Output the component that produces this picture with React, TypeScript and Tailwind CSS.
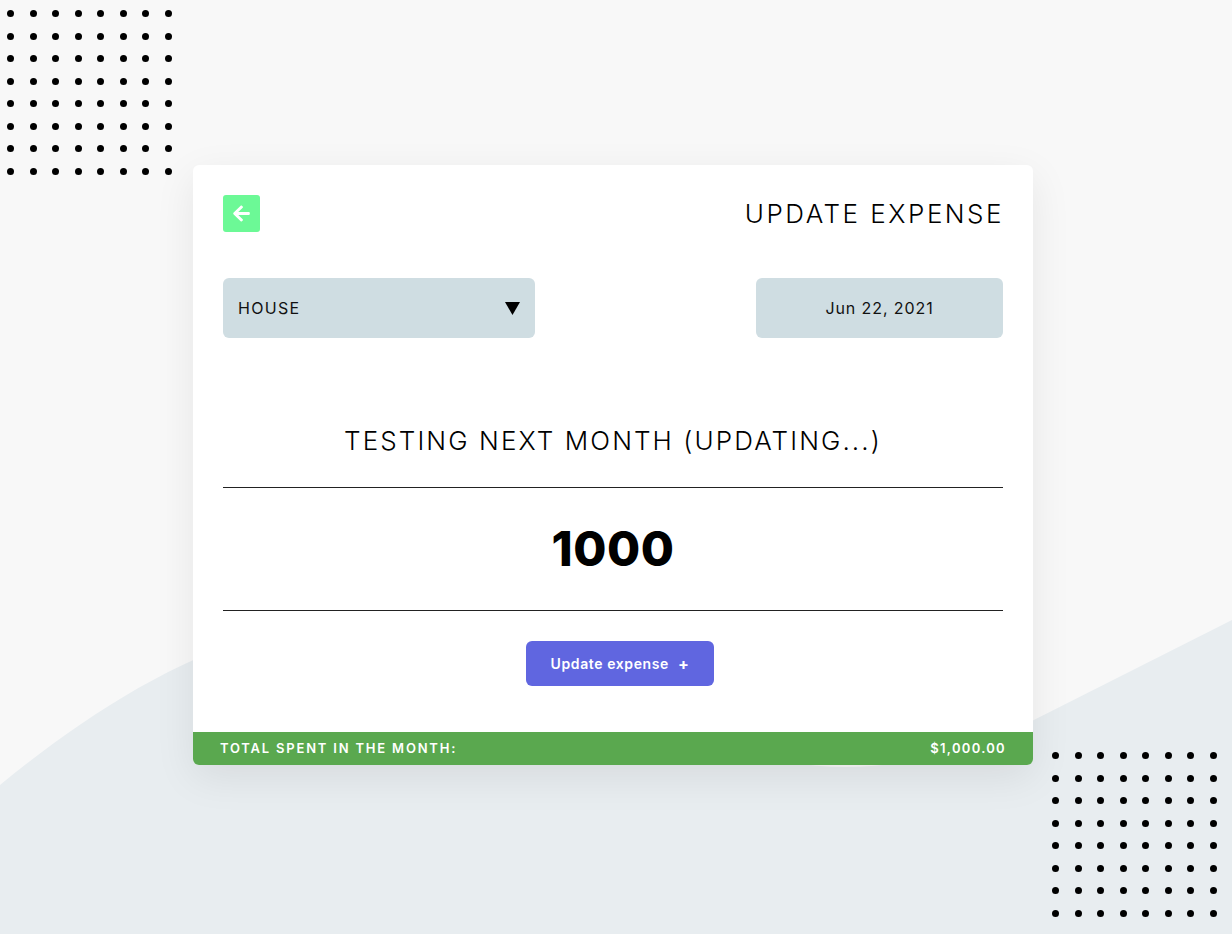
import React from "react";
import { FaArrowLeft } from "react-icons/fa";

const DotGrid = ({ className }: { className: string }) => (
  <div className={`grid grid-cols-8 gap-x-[15.5px] gap-y-[15.5px] ${className}`}>
    {Array.from({ length: 64 }).map((_, i) => (
      <span key={i} className="block w-[7px] h-[7px] rounded-full bg-black" />
    ))}
  </div>
);

export default function App() {
  return (
    <div
      className="relative min-h-[934px] w-full overflow-hidden bg-[#f8f8f8] flex items-start"
      style={{ fontFamily: "Inter, 'Liberation Sans', sans-serif" }}
    >
      <svg
        className="absolute inset-0 w-[1232px] h-[934px]"
        viewBox="0 0 1232 934"
        preserveAspectRatio="none"
      >
        <path
          d="M0,785 C200,620 420,540 650,700 C750,770 850,790 1000,737 L1232,620 L1232,934 L0,934 Z"
          fill="#e8edf0"
        />
      </svg>
      <DotGrid className="absolute left-[7px] top-[10px]" />
      <DotGrid className="absolute left-[1052px] top-[752px]" />

      <div className="relative ml-[193px] mt-[165px] w-[840px] h-[600px] bg-white rounded-[6px] shadow-[0_12px_40px_rgba(0,0,0,0.08)] flex flex-col overflow-hidden">
        <div className="flex flex-col px-[30px] pt-[30px]">
          <div className="flex items-center justify-between h-[37px]">
            <button className="w-[37px] h-[37px] rounded-[3px] bg-[#6cf996] flex items-center justify-center text-white">
              <FaArrowLeft size={19} />
            </button>
            <h1 className="text-[26px] font-light tracking-[2.5px] text-black leading-none -mr-[1px]">
              UPDATE EXPENSE
            </h1>
          </div>

          <div className="mt-[46px] flex justify-between h-[60px]">
            <div className="w-[312px] h-[60px] rounded-[6px] bg-[#cfdde2] flex items-center justify-between pl-[15px] pr-[15px]">
              <span className="text-[16px] tracking-[1.3px] text-[#111]">HOUSE</span>
              <svg width="15" height="13" viewBox="0 0 15 13">
                <polygon points="0,0 15,0 7.5,13" fill="#000" />
              </svg>
            </div>
            <div className="w-[247px] h-[60px] rounded-[6px] bg-[#cfdde2] flex items-center justify-center">
              <span className="text-[16px] tracking-[0.9px] text-[#111]">Jun 22, 2021</span>
            </div>
          </div>

          <div className="mt-[86px] h-[32px] flex items-center justify-center text-[26px] font-light tracking-[2.1px] text-black">
            TESTING NEXT MONTH (UPDATING...)
          </div>

          <div className="mt-[31px] border-t border-[#222]" />
          <div className="h-[122px] flex items-center justify-center">
            <span className="text-[48px] leading-none font-extrabold tracking-[0.5px] text-black">1000</span>
          </div>
          <div className="border-t border-[#222]" />

          <div className="mt-[30px] flex justify-center">
            <button className="ml-[14px] w-[188px] h-[45px] rounded-[6px] bg-[#6066e0] text-white text-[14px] font-semibold tracking-[0.6px] flex items-center justify-center gap-[9px]">
              <span>Update expense</span>
              <span className="text-[16px] font-bold leading-none">+</span>
            </button>
          </div>
        </div>

        <div className="mt-auto h-[33px] bg-[#5aa84f] flex items-center justify-between pl-[27px] pr-[28px] text-white text-[13px] font-semibold tracking-[1.8px]">
          <span>TOTAL SPENT IN THE MONTH:</span>
          <span className="tracking-[1.3px] -mr-[1px]">$1,000.00</span>
        </div>
      </div>
    </div>
  );
}
